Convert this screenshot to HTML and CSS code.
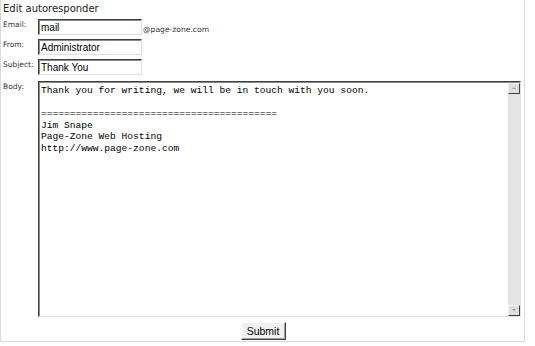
FILE: index.html
```html
<!DOCTYPE html>
<html lang="en">
<head>
    <meta charset="UTF-8">
    <title>Edit autoresponder</title>
    <link rel="stylesheet" href="styles.css">
</head>
<body>
    <div class="panel">
        <h1 class="title">Edit autoresponder</h1>
        <form class="form">
            <div class="row row-email">
                <label class="label">Email:</label>
                <input type="text" class="field" value="mail">
                <span class="domain">@page-zone.com</span>
            </div>
            <div class="row">
                <label class="label">From:</label>
                <input type="text" class="field" value="Administrator">
            </div>
            <div class="row">
                <label class="label">Subject:</label>
                <input type="text" class="field" value="Thank You">
            </div>
            <div class="row row-body">
                <label class="label">Body:</label>
                <!-- textarea with a drawn scrollbar -->
                <div class="body-box">
                    <textarea class="body-text" spellcheck="false">Thank you for writing, we will be in touch with you soon.

=========================================
Jim Snape
Page-Zone Web Hosting
http://www.page-zone.com</textarea>
                    <div class="scrollbar">
                        <span class="scroll-btn up"></span>
                        <span class="scroll-track"></span>
                        <span class="scroll-btn down"></span>
                    </div>
                </div>
            </div>
            <div class="actions">
                <button type="button" class="submit">Submit</button>
            </div>
        </form>
    </div>
</body>
</html>
```

FILE: styles.css
```css
body {
    margin: 0;
    font-family: 'DejaVu Sans', Verdana, sans-serif;
    color: #222;
    background: #fff;
}
.panel {
    width: 525px;
    height: 342px;
    box-sizing: border-box;
    border: 1px solid #dadada;
    border-top: none;
    padding-left: 1px;
}
.title {
    margin: 0;
    padding-left: 1px;
    font-size: 10px;
    font-weight: normal;
    line-height: 17px;
    height: 19px;
    color: #222;
}
.row {
    display: flex;
    align-items: flex-start;
    margin-bottom: 4px;
}
.label {
    width: 35px;
    flex-shrink: 0;
    padding-left: 1px;
    padding-top: 1px;
    font-size: 7.5px;
    line-height: 9px;
    color: #333;
}
.field {
    width: 104px;
    height: 16px;
    box-sizing: border-box;
    margin: 0;
    padding: 0 2px;
    border: 1px solid;
    border-color: #404040 #e0e0e0 #e0e0e0 #404040;
    box-shadow: inset 1px 1px 0 #8a8a8a;
    font-family: 'Liberation Sans', Arial, sans-serif;
    font-size: 10px;
    color: #000;
    outline: none;
}
.domain {
    margin-left: 1px;
    padding-top: 6px;
    font-size: 7.6px;
    line-height: 9px;
    color: #333;
}
.row-body {
    margin-top: 6px;
    margin-bottom: 5px;
}
.body-box {
    display: flex;
    width: 483px;
    height: 236px;
    box-sizing: border-box;
    border: 1px solid;
    border-color: #404040 #e0e0e0 #e0e0e0 #404040;
    box-shadow: inset 1px 1px 0 #8a8a8a;
    padding: 1px 0 0 1px;
}
.body-text {
    flex: 1;
    margin: 0;
    padding: 2px 2px 2px 1px;
    border: none;
    resize: none;
    overflow: hidden;
    outline: none;
    font-family: 'Liberation Mono', 'Courier New', monospace;
    font-size: 9.6px;
    line-height: 11.5px;
    color: #000;
    background: #fff;
}
.scrollbar {
    width: 12px;
    display: flex;
    flex-direction: column;
    background: #e4e4e4;
}
.scroll-btn {
    position: relative;
    height: 11px;
    box-sizing: border-box;
    background: #dedede;
    border: 1px solid;
    border-color: #f4f4f4 #404040 #404040 #f4f4f4;
}
.scroll-btn::after {
    content: "";
    position: absolute;
    left: 3px;
    top: 3px;
    border-left: 2px solid transparent;
    border-right: 2px solid transparent;
}
.scroll-btn.up::after {
    border-bottom: 2px solid #9a9a9a;
}
.scroll-btn.down::after {
    border-top: 2px solid #9a9a9a;
}
.scroll-track {
    flex: 1;
}
.actions {
    display: flex;
    justify-content: center;
}
.submit {
    width: 45px;
    height: 18px;
    margin: 0;
    padding: 0;
    background: #f0f0f0;
    border: 1px solid;
    border-color: #fff #404040 #404040 #fff;
    box-shadow: inset -1px -1px 0 #a0a0a0;
    font-family: 'Liberation Sans', Arial, sans-serif;
    font-size: 10.5px;
    color: #000;
}
```
